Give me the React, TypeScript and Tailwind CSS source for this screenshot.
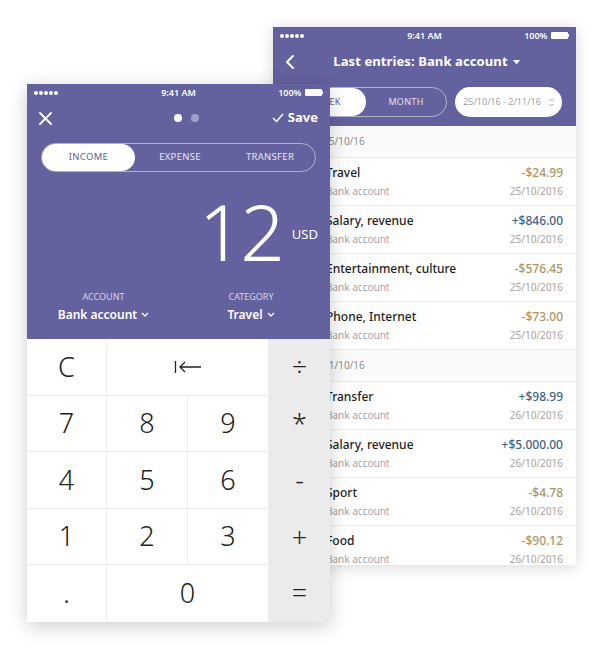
import React from 'react';

const PURPLE = 'bg-[#64619f]';

const StatusBar = () => (
  <div className="flex h-[17px] items-center justify-between px-[7px] text-[9px] font-semibold text-white">
    <div className="flex w-[70px] items-center gap-[1px]">
      {[0, 1, 2, 3, 4].map((i) => (
        <span key={i} className="h-[4px] w-[4px] rounded-full bg-white" />
      ))}
    </div>
    <span>9:41 AM</span>
    <div className="flex w-[70px] items-center justify-end gap-[3px]">
      <span>100%</span>
      <span className="flex items-center">
        <span className="h-[7px] w-[17px] rounded-[1px] bg-white" />
        <span className="h-[3px] w-[1.5px] bg-white" />
      </span>
    </div>
  </div>
);

interface Entry {
  title: string;
  amount: string;
  date: string;
  positive?: boolean;
}

const groups: { date: string; items: Entry[] }[] = [
  {
    date: '25/10/16',
    items: [
      { title: 'Travel', amount: '-$24.99', date: '25/10/2016' },
      { title: 'Salary, revenue', amount: '+$846.00', date: '25/10/2016', positive: true },
      { title: 'Entertainment, culture', amount: '-$576.45', date: '25/10/2016' },
      { title: 'Phone, Internet', amount: '-$73.00', date: '25/10/2016' },
    ],
  },
  {
    date: '21/10/16',
    items: [
      { title: 'Transfer', amount: '+$98.99', date: '26/10/2016', positive: true },
      { title: 'Salary, revenue', amount: '+$5.000.00', date: '26/10/2016', positive: true },
      { title: 'Sport', amount: '-$4.78', date: '26/10/2016' },
      { title: 'Food', amount: '-$90.12', date: '26/10/2016' },
    ],
  },
];

const EntriesPhone = () => (
  <div className="absolute left-[273px] top-[27px] flex h-[538px] w-[303px] flex-col overflow-hidden bg-white shadow-[0_2px_14px_rgba(0,0,0,0.16)]">
    <div className={`${PURPLE} h-[99px] shrink-0`}>
      <StatusBar />
      <div className="relative flex h-[36px] items-center justify-center text-white">
        <svg className="absolute left-[11px]" width="12" height="16" viewBox="0 0 12 16" fill="none">
          <path d="M9 2 L3 8 L9 14" stroke="white" strokeWidth="2" strokeLinecap="round" strokeLinejoin="round" />
        </svg>
        <span className="pl-[4px] text-[13px] font-bold tracking-[0.1px]">Last entries: Bank account</span>
        <svg className="ml-[5px]" width="7" height="5" viewBox="0 0 7 5">
          <path d="M0 0 H7 L3.5 4.5 Z" fill="white" />
        </svg>
      </div>
      <div className="flex items-center gap-[8px] pl-[16px] pr-[14px] pt-[7px]">
        <div className="flex h-[30px] w-[158px] rounded-full border border-white/50 text-[9px] tracking-[0.3px]">
          <div className="flex w-[76px] items-center justify-center rounded-full bg-white text-[#64619f]">WEEK</div>
          <div className="flex flex-1 items-center justify-center text-white/80">MONTH</div>
        </div>
        <div className="flex h-[30px] flex-1 items-center justify-center gap-[8px] rounded-full bg-white text-[9px] text-[#a0a0a0]">
          <span>25/10/16 - 2/11/16</span>
          <svg width="5" height="9" viewBox="0 0 5 9" fill="none">
            <path d="M0.5 3 L2.5 1 L4.5 3 M0.5 6 L2.5 8 L4.5 6" stroke="#a0a0a0" strokeWidth="1" />
          </svg>
        </div>
      </div>
    </div>
    <div className="flex flex-col">
      {groups.map((g) => (
        <div key={g.date}>
          <div className="flex h-[32px] items-center border-b border-[#ececec] bg-[#fafafa] pl-[50px] text-[10px] text-[#8c8c8c]">
            {g.date}
          </div>
          {g.items.map((e, i) => (
            <div key={i} className="flex h-[48px] items-center justify-between border-b border-[#ececec] pl-[53px] pr-[13px]">
              <div className="flex flex-col gap-[2px]">
                <span className="text-[12px] font-medium text-[#1e1e1e]">{e.title}</span>
                <span className="text-[10px] text-[#a3a3a3]">Bank account</span>
              </div>
              <div className="flex flex-col items-end gap-[2px]">
                <span className={`text-[12px] font-medium ${e.positive ? 'text-[#3f6385]' : 'text-[#ad9563]'}`}>{e.amount}</span>
                <span className="text-[10px] text-[#a3a3a3]">{e.date}</span>
              </div>
            </div>
          ))}
        </div>
      ))}
    </div>
  </div>
);

const Key = ({ children, op, span, last }: { children: React.ReactNode; op?: boolean; span?: boolean; last?: boolean }) => (
  <div
    className={`flex items-center justify-center text-[27px] font-light text-[#222] ${span ? 'col-span-2' : ''} ${
      op ? 'bg-[#ebebeb] text-[24px]' : 'border-r border-[#ececec] bg-white'
    } ${!op && !last ? 'border-b' : ''}`}
  >
    {children}
  </div>
);

const CalculatorPhone = () => (
  <div className="absolute left-[27px] top-[84px] flex h-[538px] w-[303px] flex-col overflow-hidden bg-white shadow-[0_4px_18px_rgba(0,0,0,0.2)]">
    <div className={`${PURPLE} h-[255px] shrink-0 text-white`}>
      <StatusBar />
      <div className="flex h-[34px] items-center justify-between pl-[12px] pr-[12px]">
        <svg width="13" height="13" viewBox="0 0 13 13">
          <path d="M1 1 L12 12 M12 1 L1 12" stroke="white" strokeWidth="1.8" strokeLinecap="round" />
        </svg>
        <div className="ml-[50px] flex items-center gap-[9px]">
          <span className="h-[8px] w-[8px] rounded-full bg-white" />
          <span className="h-[8px] w-[8px] rounded-full bg-white/40" />
        </div>
        <div className="flex items-center gap-[4px] text-[13px] font-bold">
          <svg width="12" height="10" viewBox="0 0 12 10" fill="none">
            <path d="M1 5 L4.5 8.5 L11 1" stroke="white" strokeWidth="1.5" />
          </svg>
          <span>Save</span>
        </div>
      </div>
      <div className="mx-[14px] mt-[8px] flex h-[29px] rounded-full border border-white/50 text-[9.5px] tracking-[0.3px]">
        <div className="flex w-[93px] items-center justify-center rounded-full bg-white text-[#64619f]">INCOME</div>
        <div className="flex flex-1 items-center justify-center text-white/85">EXPENSE</div>
        <div className="flex flex-1 items-center justify-center text-white/85">TRANSFER</div>
      </div>
      <div className="flex items-center justify-end gap-[10px] pr-[12px] pt-[24px]">
        <span className="text-[78px] font-light leading-[70px] tracking-[-3px]">12</span>
        <span className="mt-[8px] text-[13px]">USD</span>
      </div>
      <div className="flex pt-[24px]">
        <div className="flex w-[153px] flex-col items-center gap-[2px]">
          <span className="text-[9px] text-white/75">ACCOUNT</span>
          <span className="flex items-center gap-[4px] text-[12px] font-semibold">
            Bank account
            <svg width="8" height="5" viewBox="0 0 8 5" fill="none">
              <path d="M1 1 L4 4 L7 1" stroke="white" strokeWidth="1.3" />
            </svg>
          </span>
        </div>
        <div className="flex flex-1 flex-col items-center gap-[2px] pr-[8px]">
          <span className="text-[9px] text-white/75">CATEGORY</span>
          <span className="flex items-center gap-[4px] text-[12px] font-semibold">
            Travel
            <svg width="8" height="5" viewBox="0 0 8 5" fill="none">
              <path d="M1 1 L4 4 L7 1" stroke="white" strokeWidth="1.3" />
            </svg>
          </span>
        </div>
      </div>
    </div>
    <div className="grid flex-1 grid-cols-[80px_81px_81px_61px] grid-rows-5">
      <Key>C</Key>
      <Key span>
        <svg width="28" height="14" viewBox="0 0 28 14" fill="none">
          <path d="M1.5 1 V13 M27 7 H6 M11 2 L6 7 L11 12" stroke="#222" strokeWidth="1.3" />
        </svg>
      </Key>
      <Key op>÷</Key>
      <Key>7</Key>
      <Key>8</Key>
      <Key>9</Key>
      <Key op>*</Key>
      <Key>4</Key>
      <Key>5</Key>
      <Key>6</Key>
      <Key op>-</Key>
      <Key>1</Key>
      <Key>2</Key>
      <Key>3</Key>
      <Key op>+</Key>
      <Key last>.</Key>
      <Key span last>0</Key>
      <Key op>=</Key>
    </div>
  </div>
);

export default function App() {
  return (
    <div className="relative h-[649px] w-[603px] overflow-hidden bg-white font-['Noto_Sans',sans-serif]">
      <EntriesPhone />
      <CalculatorPhone />
    </div>
  );
}
